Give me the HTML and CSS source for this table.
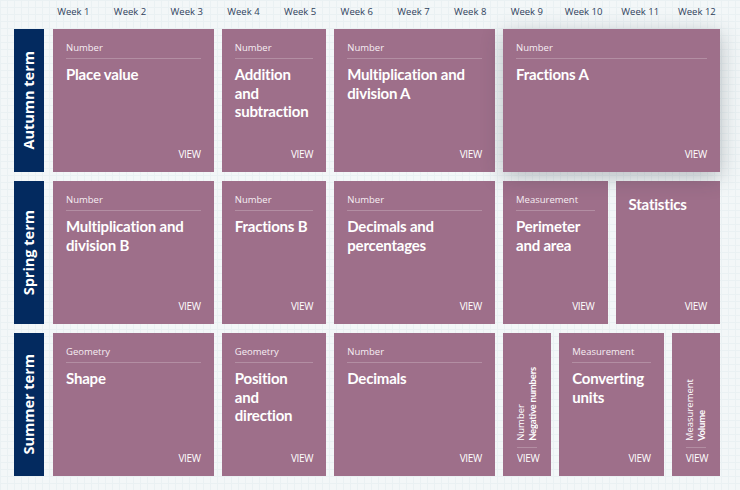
FILE: index.html
```html
<!DOCTYPE html>
<html lang="en">
<head>
<meta charset="utf-8">
<title>Scheme of learning</title>
<link rel="stylesheet" href="styles.css">
</head>
<body>
<div class="page">
  <div class="weeks">
    <span>Week 1</span><span>Week 2</span><span>Week 3</span><span>Week 4</span>
    <span>Week 5</span><span>Week 6</span><span>Week 7</span><span>Week 8</span>
    <span>Week 9</span><span>Week 10</span><span>Week 11</span><span>Week 12</span>
  </div>

  <div class="term">
    <div class="term-label"><span>Autumn term</span></div>
    <div class="blocks">
      <div class="card span3"><div class="label">Number</div><div class="title">Place value</div><div class="view">VIEW</div></div>
      <div class="card span2"><div class="label">Number</div><div class="title">Addition and subtraction</div><div class="view">VIEW</div></div>
      <div class="card span3"><div class="label">Number</div><div class="title">Multiplication and division A</div><div class="view">VIEW</div></div>
      <div class="card span4 hover"><div class="label">Number</div><div class="title">Fractions A</div><div class="view">VIEW</div></div>
    </div>
  </div>

  <div class="term">
    <div class="term-label"><span>Spring term</span></div>
    <div class="blocks">
      <div class="card span3"><div class="label">Number</div><div class="title">Multiplication and division B</div><div class="view">VIEW</div></div>
      <div class="card span2"><div class="label">Number</div><div class="title">Fractions B</div><div class="view">VIEW</div></div>
      <div class="card span3"><div class="label">Number</div><div class="title">Decimals and percentages</div><div class="view">VIEW</div></div>
      <div class="card span2"><div class="label">Measurement</div><div class="title">Perimeter and area</div><div class="view">VIEW</div></div>
      <div class="card span2"><div class="title solo">Statistics</div><div class="view">VIEW</div></div>
    </div>
  </div>

  <div class="term">
    <div class="term-label"><span>Summer term</span></div>
    <div class="blocks">
      <div class="card span3"><div class="label">Geometry</div><div class="title">Shape</div><div class="view">VIEW</div></div>
      <div class="card span2"><div class="label">Geometry</div><div class="title">Position and direction</div><div class="view">VIEW</div></div>
      <div class="card span3"><div class="label">Number</div><div class="title">Decimals</div><div class="view">VIEW</div></div>
      <div class="card narrow">
        <div class="vtext"><span class="vlabel">Number</span><span class="vtitle">Negative numbers</span></div>
        <div class="vrule"></div>
        <div class="view">VIEW</div>
      </div>
      <div class="card span2"><div class="label">Measurement</div><div class="title">Converting units</div><div class="view">VIEW</div></div>
      <div class="card narrow">
        <div class="vtext"><span class="vlabel">Measurement</span><span class="vtitle">Volume</span></div>
        <div class="vrule"></div>
        <div class="view">VIEW</div>
      </div>
    </div>
  </div>
</div>
</body>
</html>
```

FILE: styles.css
```css
* { box-sizing: border-box; }

html, body {
  margin: 0;
  padding: 0;
}

body {
  width: 740px;
  height: 490px;
  overflow: hidden;
  font-family: "Lato", "Open Sans", sans-serif;
  background-color: #f3f7f8;
  background-image:
    linear-gradient(to right, #eaf1f3 1px, transparent 1px),
    linear-gradient(to bottom, #eaf1f3 1px, transparent 1px);
  background-size: 7px 7px;
}

.page {
  padding: 0 0 0 14px;
}

.weeks {
  display: grid;
  grid-template-columns: repeat(12, 56.7px);
  margin-left: 31px;
  height: 29px;
  padding-top: 6px;
}

.weeks span {
  text-align: center;
  font-family: "Open Sans", sans-serif;
  font-size: 9.5px;
  line-height: 12px;
  color: #2f3f5c;
}

.term {
  display: flex;
  gap: 9px;
  height: 143px;
  margin-bottom: 9px;
}

.term-label {
  width: 30px;
  background: #032a5f;
  display: flex;
  align-items: center;
  justify-content: center;
}

.term-label span {
  writing-mode: vertical-rl;
  transform: rotate(180deg);
  color: #fff;
  font-family: "Open Sans", sans-serif;
  font-weight: 700;
  font-size: 14.5px;
  line-height: 16px;
  white-space: nowrap;
}

.blocks {
  width: 667px;
  height: 143px;
  display: grid;
  grid-template-columns: repeat(12, 1fr);
  grid-template-rows: 143px;
  column-gap: 8px;
}

.card {
  background: #9e6f8a;
  color: #fff;
  padding: 13px 13px 12px;
  display: flex;
  flex-direction: column;
  min-height: 0;
  overflow: hidden;
}

.span2 { grid-column: span 2; }
.span3 { grid-column: span 3; }
.span4 { grid-column: span 4; }

.card.hover {
  box-shadow: 0 5px 20px rgba(40, 50, 60, 0.3);
  position: relative;
  z-index: 1;
  overflow: visible;
}

.label {
  font-family: "Open Sans", sans-serif;
  font-size: 9.5px;
  line-height: 12px;
  padding-bottom: 4px;
  border-bottom: 1px solid rgba(255, 255, 255, 0.22);
  color: #f6eef3;
}

.title {
  margin-top: 6px;
  font-weight: 700;
  font-size: 15px;
  line-height: 18.5px;
  letter-spacing: -0.2px;
}

.title.solo {
  margin-top: 1px;
}

.view {
  margin-top: auto;
  text-align: right;
  font-family: "Open Sans", sans-serif;
  font-size: 10px;
  line-height: 12px;
  letter-spacing: -0.3px;
}

.card.narrow {
  padding: 13px 14px 12px;
  justify-content: flex-end;
}

.vtext {
  writing-mode: vertical-rl;
  transform: rotate(180deg);
  align-self: center;
  white-space: nowrap;
  margin-bottom: 6px;
}

.vlabel {
  display: block;
  font-family: "Open Sans", sans-serif;
  font-size: 9.5px;
  line-height: 12px;
}

.vtitle {
  display: block;
  font-weight: 700;
  font-size: 9.5px;
  line-height: 12px;
  letter-spacing: -0.2px;
}

.vrule {
  border-top: 1px solid rgba(255, 255, 255, 0.22);
  margin-bottom: 4px;
}

.narrow .view {
  margin-top: 0;
  text-align: center;
}
```
